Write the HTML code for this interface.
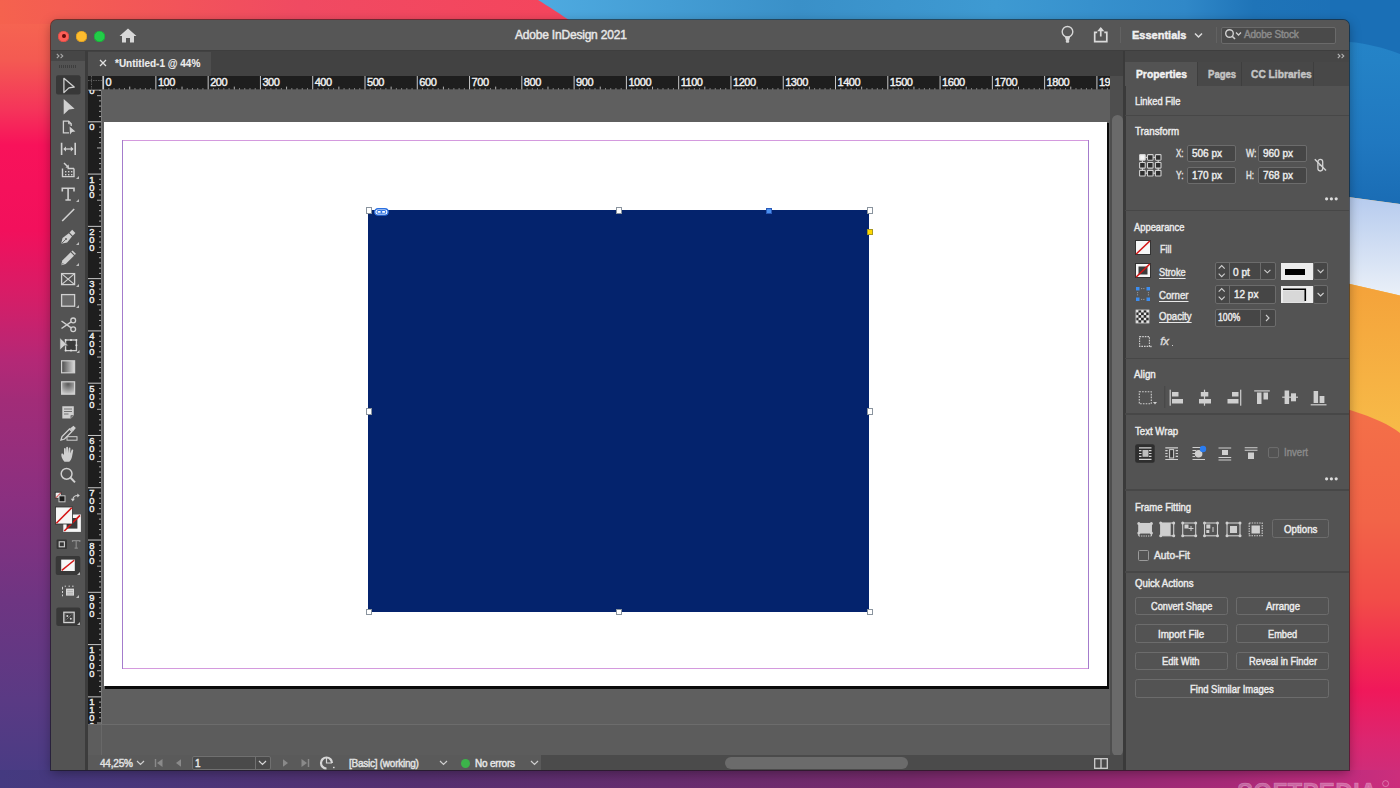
<!DOCTYPE html>
<html><head><meta charset="utf-8">
<style>
*{margin:0;padding:0;box-sizing:border-box}
html,body{width:1400px;height:788px;overflow:hidden;background:#444}
body{position:relative;font-family:"Liberation Sans",sans-serif;color:#e6e6e6}
.a{position:absolute}
.t{position:absolute;white-space:nowrap;line-height:1;-webkit-text-stroke:0.42px currentColor}
svg{position:absolute;overflow:visible}
.u{text-decoration:underline;text-underline-offset:2px}
</style></head><body>
<svg style="left:0;top:0" width="1400" height="788" viewBox="0 0 1400 788">
<defs>
<linearGradient id="gl" x1="0" y1="0" x2="0" y2="788" gradientUnits="userSpaceOnUse">
<stop offset="0.0000" stop-color="#f76a50"/>
<stop offset="0.0761" stop-color="#f45a52"/>
<stop offset="0.1396" stop-color="#f5345a"/>
<stop offset="0.1840" stop-color="#f8125a"/>
<stop offset="0.2919" stop-color="#f2105c"/>
<stop offset="0.3807" stop-color="#d41e68"/>
<stop offset="0.4569" stop-color="#b42876"/>
<stop offset="0.5076" stop-color="#a22c78"/>
<stop offset="0.6345" stop-color="#8a3080"/>
<stop offset="0.7614" stop-color="#6e3582"/>
<stop offset="0.8883" stop-color="#5a3a84"/>
<stop offset="1.0000" stop-color="#463c84"/>
</linearGradient>
<linearGradient id="gt" x1="0" y1="0" x2="600" y2="0" gradientUnits="userSpaceOnUse">
<stop offset="0" stop-color="#f5624e"/>
<stop offset="0.5" stop-color="#f04a62"/>
<stop offset="1" stop-color="#f5445c"/>
</linearGradient>
<linearGradient id="gb" x1="0" y1="0" x2="1400" y2="0" gradientUnits="userSpaceOnUse">
<stop offset="0" stop-color="#443a80"/>
<stop offset="0.3" stop-color="#553070"/>
<stop offset="0.65" stop-color="#782a6c"/>
<stop offset="0.88" stop-color="#a82a78"/>
<stop offset="0.96" stop-color="#c02c7e"/>
<stop offset="1" stop-color="#cc2e7c"/>
</linearGradient>
<linearGradient id="gblue" x1="540" y1="0" x2="1400" y2="0" gradientUnits="userSpaceOnUse">
<stop offset="0" stop-color="#4eaae0"/>
<stop offset="0.3" stop-color="#3a90c8"/>
<stop offset="0.53" stop-color="#3e9ad2"/>
<stop offset="0.75" stop-color="#3088c8"/>
<stop offset="0.83" stop-color="#1f74b8"/>
<stop offset="1" stop-color="#1a6eb6"/>
</linearGradient>
<linearGradient id="gr" x1="0" y1="0" x2="0" y2="788" gradientUnits="userSpaceOnUse">
<stop offset="0.0000" stop-color="#f7b846"/>
<stop offset="0.5140" stop-color="#f7b846"/>
<stop offset="0.5178" stop-color="#f47048"/>
<stop offset="0.6599" stop-color="#f26448"/>
<stop offset="0.7614" stop-color="#f24c48"/>
<stop offset="0.8249" stop-color="#f22e50"/>
<stop offset="0.8756" stop-color="#f0185a"/>
<stop offset="0.9391" stop-color="#dc2670"/>
<stop offset="1.0000" stop-color="#c8307e"/>
</linearGradient>
<linearGradient id="gbl2" x1="0" y1="0" x2="0" y2="204" gradientUnits="userSpaceOnUse">
<stop offset="0" stop-color="#2686ca"/><stop offset="0.3" stop-color="#2482c6"/><stop offset="0.7" stop-color="#2078c0"/><stop offset="1" stop-color="#1a6cb4"/></linearGradient>
<linearGradient id="glt" x1="0" y1="197" x2="0" y2="295" gradientUnits="userSpaceOnUse">
<stop offset="0" stop-color="#b6cbee"/><stop offset="1" stop-color="#eaf0f8"/></linearGradient>
<linearGradient id="gor" x1="0" y1="282" x2="0" y2="430" gradientUnits="userSpaceOnUse">
<stop offset="0" stop-color="#f4a23a"/><stop offset="1" stop-color="#f7ba48"/></linearGradient>
</defs>
<rect width="1400" height="788" fill="url(#gl)"/>
<rect width="700" height="24" fill="url(#gt)"/>
<path d="M538 0 C548 6 560 14 575 24 L1400 24 L1400 0 Z" fill="url(#gblue)"/>
<rect x="1330" y="0" width="70" height="788" fill="url(#gr)"/>
<path d="M1330 0 H1400 V204 L1350 197.3 L1330 195 Z" fill="url(#gbl2)"/>
<path d="M1330 0 H1400 V54 C1385 48 1365 43 1350 42 L1330 40 Z" fill="#1a6fb6"/>
<path d="M1330 195 L1350 197.3 L1400 204 V295.5 L1350 284 L1330 280 Z" fill="url(#glt)"/>
<path d="M1330 280 L1350 284 L1400 295.5 V433 C1390 425 1375 418 1350 410 L1330 407 Z" fill="url(#gor)"/>
<rect x="0" y="770" width="1400" height="18" fill="url(#gb)"/>
</svg>
<div class="a" style="left:51px;top:20px;width:1298px;height:750px;background:#535353;border-radius:6px 6px 0 0;box-shadow:0 0 0 1px rgba(20,20,20,.55),0 3px 12px rgba(0,0,0,.35)"></div>
<div class="a" style="left:51px;top:20px;width:1298px;height:30px;background:#565656;border-radius:6px 6px 0 0"></div>
<div class="a" style="left:51px;top:50px;width:1298px;height:1px;background:#3e3e3e;"></div>
<div class="a" style="left:58.3px;top:30.6px;width:11px;height:11px;background:#fd5e57;border-radius:50%;box-shadow:inset 0 0 0 0.6px #d84a44"></div>
<div class="a" style="left:61.9px;top:34.2px;width:3.8px;height:3.8px;background:#600a0a;border-radius:50%"></div>
<div class="a" style="left:75.8px;top:30.6px;width:11px;height:11px;background:#fdbc2e;border-radius:50%;box-shadow:inset 0 0 0 0.6px #d89a20"></div>
<div class="a" style="left:93.6px;top:30.6px;width:11px;height:11px;background:#22cd48;border-radius:50%;box-shadow:inset 0 0 0 0.6px #1aa838"></div>
<svg style="left:119px;top:28px;" width="18" height="15" viewBox="0 0 18 15"><path d="M9 0.5 L17.5 8 L15 8 L15 14.5 L11 14.5 L11 10 L7 10 L7 14.5 L3 14.5 L3 8 L0.5 8 Z" fill="#d8d8d8"/></svg>
<div class="t" style="left:515px;top:29px;font-size:12px;color:#e8e8e8;font-weight:400;letter-spacing:-0.2px;">Adobe InDesign 2021</div>
<svg style="left:1060px;top:25px;" width="16" height="19" viewBox="0 0 16 19"><circle cx="7.5" cy="6.8" r="5.3" fill="none" stroke="#d6d6d6" stroke-width="1.4"/><path d="M4.6 11.2 L6 15.5 L9 15.5 L10.4 11.2 Z" fill="#d6d6d6"/><rect x="5.8" y="15" width="3.4" height="2.8" rx="1" fill="#d6d6d6"/></svg>
<svg style="left:1093px;top:26px;" width="16" height="18" viewBox="0 0 16 18"><path d="M4.2 6.3 L1.7 6.3 L1.7 15.7 L13.8 15.7 L13.8 6.3 L11.3 6.3" fill="none" stroke="#dadada" stroke-width="1.7"/><path d="M7.75 2 L7.75 10.5" stroke="#dadada" stroke-width="1.7"/><path d="M4.2 5.2 L7.75 1 L11.3 5.2 Z" fill="#dadada"/></svg>
<div class="a" style="left:1120px;top:27px;width:1px;height:16px;background:#626262;"></div>
<div class="t" style="left:1132px;top:30px;font-size:11px;color:#f0f0f0;font-weight:700;letter-spacing:0px;">Essentials</div>
<svg style="left:1194px;top:32px;" width="10" height="7" viewBox="0 0 10 7"><path d="M1 1.5 L4.5 5 L8 1.5" fill="none" stroke="#dcdcdc" stroke-width="1.5"/></svg>
<div class="a" style="left:1216px;top:27px;width:1px;height:16px;background:#626262;"></div>
<div class="a" style="left:1221px;top:26.5px;width:115px;height:17px;background:#4a4a4a;border:1px solid #6a6a6a;border-radius:2px"></div>
<svg style="left:1224px;top:28px;" width="20" height="13" viewBox="0 0 20 13"><circle cx="5.5" cy="5.5" r="3.8" fill="none" stroke="#d0d0d0" stroke-width="1.4"/><path d="M8.2 8.2 L11 11" stroke="#d0d0d0" stroke-width="1.6"/><path d="M12 4.5 L14.5 7 L17 4.5" fill="none" stroke="#d0d0d0" stroke-width="1.3"/></svg>
<div class="t" style="left:1244px;top:30px;font-size:10px;color:#8c8c8c;font-weight:400;letter-spacing:-0.2px;">Adobe Stock</div>
<div class="a" style="left:51px;top:51px;width:35px;height:10px;background:#464646;"></div>
<svg style="left:55.5px;top:53px;" width="8" height="6" viewBox="0 0 8 6"><path d="M0.8 0.8 L3 3 L0.8 5.2 M4.6 0.8 L6.8 3 L4.6 5.2" fill="none" stroke="#a8a8a8" stroke-width="1.1"/></svg>
<div class="a" style="left:85px;top:51px;width:3px;height:719px;background:#3c3c3c;"></div>
<svg style="left:59px;top:65px;" width="17" height="3" viewBox="0 0 17 3"><rect x="0" y="0" width="1" height="3" fill="#3e3e3e"/><rect x="2" y="0" width="1" height="3" fill="#3e3e3e"/><rect x="4" y="0" width="1" height="3" fill="#3e3e3e"/><rect x="6" y="0" width="1" height="3" fill="#3e3e3e"/><rect x="8" y="0" width="1" height="3" fill="#3e3e3e"/><rect x="10" y="0" width="1" height="3" fill="#3e3e3e"/><rect x="12" y="0" width="1" height="3" fill="#3e3e3e"/><rect x="14" y="0" width="1" height="3" fill="#3e3e3e"/><rect x="16" y="0" width="1" height="3" fill="#3e3e3e"/></svg>
<svg style="left:51px;top:51px" width="35" height="720" viewBox="51 51 35 720">
<rect x="56" y="75.3" width="24.5" height="19.3" rx="2" fill="#383838"/>
<path d="M63.9 78.3 L74.2 87 L68.9 87.9 L63.9 92.6 Z" fill="none" stroke="#d0d0d0" stroke-width="1.3" stroke-linejoin="round"/>
<path d="M63.7 99 L74.6 108.8 L69 109.6 L63.7 114.6 Z" fill="#d0d0d0"/>
<path d="M69 132.8 L63.4 132.8 L63.4 121.2 L68.6 121.2 L71.2 123.8 L71.2 126" fill="none" stroke="#d0d0d0" stroke-width="1.3"/>
<path d="M68.6 121.2 L68.6 123.8 L71.2 123.8" fill="none" stroke="#d0d0d0" stroke-width="1"/>
<path d="M69.6 126.6 L75.4 131.6 L72 132 L70 134.6 Z" fill="#d0d0d0"/>
<path d="M61.6 142.8 V155 M75.2 142.8 V155" stroke="#d0d0d0" stroke-width="1.6"/>
<path d="M64 149 H72.8" stroke="#d0d0d0" stroke-width="1.3"/>
<path d="M63.2 149 L66 146.4 L66 151.6 Z M73.6 149 L70.8 146.4 L70.8 151.6 Z" fill="#d0d0d0"/>
<path d="M62.5 168.5 V176.6 H74 V168.5 M67.5 168.5 H74" fill="none" stroke="#d0d0d0" stroke-width="1.4"/>
<path d="M64 163 L68 167" stroke="#d0d0d0" stroke-width="1.4"/><path d="M69 168 L65.5 167.6 L68.6 164.5 Z" fill="#d0d0d0"/>
<rect x="65" y="171" width="1.4" height="1.4" fill="#d0d0d0"/><rect x="68" y="171" width="1.4" height="1.4" fill="#d0d0d0"/><rect x="71" y="171" width="1.4" height="1.4" fill="#d0d0d0"/>
<rect x="65" y="174" width="1.4" height="1.4" fill="#d0d0d0"/><rect x="68" y="174" width="1.4" height="1.4" fill="#d0d0d0"/><rect x="71" y="174" width="1.4" height="1.4" fill="#d0d0d0"/>
<path d="M79 176 L79 179 L76 179 Z" fill="#bdbdbd"/>
<path d="M62.3 191.5 V188.3 H74 V191.5 M68.1 188.3 V200 M65.4 200 H70.8" fill="none" stroke="#d0d0d0" stroke-width="1.6"/>
<path d="M79 199 L79 202 L76 202 Z" fill="#bdbdbd"/>
<path d="M62.2 221 L74.2 209" stroke="#d0d0d0" stroke-width="1.6"/>
<path d="M61.2 243.8 L62.5 238 L68.8 233.2 L72 236.4 L67.2 242.6 Z" fill="#d0d0d0"/>
<path d="M69.5 232.5 L72.2 229.8 L75.4 233 L72.7 235.7 Z" fill="#d0d0d0"/>
<path d="M61.5 243.6 L65.5 239.6" stroke="#535353" stroke-width="0.9"/><circle cx="66" cy="239" r="0.9" fill="#535353"/>
<path d="M79 242 L79 245 L76 245 Z" fill="#bdbdbd"/>
<path d="M61.2 265.2 L62.3 260.6 L70.6 252.3 L74 255.7 L65.7 264 Z" fill="#d0d0d0"/>
<path d="M71.4 251.5 L72.5 250.4 L75.9 253.8 L74.8 254.9 Z" fill="#d0d0d0"/>
<path d="M61.8 264.6 L63.2 263.2" stroke="#535353" stroke-width="1"/>
<path d="M79 263 L79 266 L76 266 Z" fill="#bdbdbd"/>
<rect x="61.6" y="273.6" width="13" height="11" fill="none" stroke="#d0d0d0" stroke-width="1.3"/>
<path d="M61.6 273.6 L74.6 284.6 M74.6 273.6 L61.6 284.6" stroke="#d0d0d0" stroke-width="1.2"/>
<path d="M79 284 L79 287 L76 287 Z" fill="#bdbdbd"/>
<rect x="61.6" y="294.6" width="13" height="11.6" fill="#6a6a6a" stroke="#d0d0d0" stroke-width="1.3"/>
<path d="M79 305 L79 308 L76 308 Z" fill="#bdbdbd"/>
<circle cx="73.2" cy="320.4" r="2.4" fill="none" stroke="#d0d0d0" stroke-width="1.3"/>
<circle cx="73.2" cy="329.2" r="2.4" fill="none" stroke="#d0d0d0" stroke-width="1.3"/>
<path d="M71.2 321.8 L61.5 328.5 M71.2 327.8 L61.5 321" stroke="#d0d0d0" stroke-width="1.5"/>
<rect x="65.6" y="340" width="10.8" height="10.6" fill="#3a3a3a" stroke="#d0d0d0" stroke-width="1.3"/>
<circle cx="65.6" cy="340" r="1" fill="#e0e0e0"/><circle cx="71" cy="340" r="1" fill="#e0e0e0"/><circle cx="76.4" cy="340" r="1" fill="#e0e0e0"/>
<circle cx="65.6" cy="350.6" r="1" fill="#e0e0e0"/><circle cx="71" cy="350.6" r="1" fill="#e0e0e0"/><circle cx="76.4" cy="345.3" r="1" fill="#e0e0e0"/>
<path d="M59.9 337.8 L68.2 345.6 L64.2 345.9 L59.9 350 Z" fill="#d0d0d0" stroke="#535353" stroke-width="0.6"/>
<path d="M79.5 350 L79.5 353 L76.5 353 Z" fill="#bdbdbd"/>
<defs><linearGradient id="tg1" x1="0" y1="0" x2="1" y2="0"><stop offset="0" stop-color="#4a4a4a"/><stop offset="1" stop-color="#dcdcdc"/></linearGradient>
<radialGradient id="tg2" cx="0.5" cy="0.2" r="0.9"><stop offset="0" stop-color="#5a5a5a"/><stop offset="1" stop-color="#d8d8d8"/></radialGradient></defs>
<rect x="61.6" y="360.8" width="13" height="12" fill="url(#tg1)" stroke="#d0d0d0" stroke-width="1.2"/>
<rect x="61.6" y="381.8" width="13" height="12.4" fill="url(#tg2)" stroke="#d0d0d0" stroke-width="1.2"/>
<path d="M62.3 406.3 H73.8 V415.6 L70.9 418.5 H62.3 Z" fill="#d0d0d0"/>
<path d="M64 409 H72 M64 411.5 H72 M64 414 H68.5" stroke="#6a6a6a" stroke-width="0.9"/>
<path d="M70.9 418.5 V415.6 H73.8" fill="#8a8a8a" stroke="#535353" stroke-width="0.6"/>
<path d="M61 440 L62 436.5 L69.5 429 L72 431.5 L64.5 439 Z" fill="none" stroke="#d0d0d0" stroke-width="1.3"/>
<path d="M70 428.5 L73.5 425.8 L75.8 428.1 L73 431.5 Z" fill="#d0d0d0"/>
<rect x="67" y="436.7" width="10" height="3.5" fill="none" stroke="#d0d0d0" stroke-width="1"/>
<path d="M64.5 461.8 C61.5 458.5 61 455 61.5 453.8 C62.2 453 63.4 453.7 64 455.2 L64 448.8 C64 447.7 65.6 447.7 65.7 448.8 L66 453 L66.2 447.6 C66.3 446.6 68 446.6 68 447.6 L68.2 453 L68.8 448.2 C69 447.2 70.5 447.3 70.4 448.4 L70.3 453.5 L71.6 450 C72 449.1 73.4 449.5 73.2 450.5 L72 456.8 C71.5 459 70.5 460.8 69.3 461.8 Z" fill="#d0d0d0"/>
<circle cx="66.6" cy="473.8" r="5.4" fill="none" stroke="#d0d0d0" stroke-width="1.5"/>
<path d="M70.6 477.8 L75 482.4" stroke="#d0d0d0" stroke-width="2"/>
<rect x="55.2" y="492.2" width="6" height="6" fill="#f0f0f0" stroke="#2a2a2a" stroke-width="0.8"/>
<path d="M55.8 497.8 L60.8 492.8" stroke="#d01818" stroke-width="1"/>
<rect x="59" y="495.8" width="6" height="6" fill="#1a1a1a" stroke="#c8c8c8" stroke-width="1"/>
<path d="M73 499.5 C73 496.6 74.5 495.5 77.8 495.5" fill="none" stroke="#d0d0d0" stroke-width="1.1"/>
<path d="M72.8 501.5 L70.8 498.8 L74.9 498.8 Z M79.8 495.5 L77.3 493.5 L77.3 497.5 Z" fill="#d0d0d0"/>
<path d="M77.8 497.5 L77.8 502" stroke="#d0d0d0" stroke-width="0"/>
<rect x="63.3" y="514.5" width="17.6" height="17.4" fill="#f6f6f6"/>
<rect x="66.6" y="518" width="10.8" height="10.6" fill="#3a3a3a"/>
<path d="M64.3 531 L80 515.4" stroke="#d41515" stroke-width="1.6"/>
<rect x="55.5" y="507" width="17" height="17" fill="#f6f6f6" stroke="#2e2e2e" stroke-width="0.8"/>
<path d="M56.3 523.2 L71.8 507.8" stroke="#d41515" stroke-width="1.6"/>
<rect x="56.6" y="539.6" width="10.4" height="9.4" rx="1" fill="#353535"/>
<rect x="59.2" y="541.8" width="5.2" height="5" fill="none" stroke="#cfcfcf" stroke-width="1.1"/>
<path d="M72.5 542 V540.6 H79.8 V542 M76.2 540.6 V548.2 M74.6 548.2 H77.8" fill="none" stroke="#8a8a8a" stroke-width="1.2"/>
<rect x="55.7" y="556" width="24.6" height="19" rx="2" fill="#383838"/>
<rect x="61.2" y="559.6" width="13.6" height="11.4" fill="#f6f6f6"/>
<path d="M61.8 570.4 L74.2 560.2" stroke="#d41515" stroke-width="1.4"/>
<path d="M80 572 L80 575 L77 575 Z" fill="#bdbdbd"/>
<rect x="66" y="588.6" width="8" height="7" fill="#d8d8d8"/>
<path d="M67.2 590.6 H73 M67.2 592.4 H73 M67.2 594 H73" stroke="#a0a0a0" stroke-width="0.7"/>
<path d="M62.5 586.8 V589.5 M62.5 591 V593 M62.5 594.5 V596.3 M64.7 586.2 H66 M68.5 586.2 H70 M72 586.2 H73.6" stroke="#d0d0d0" stroke-width="1"/>
<path d="M79 595 L79 598 L76 598 Z" fill="#bdbdbd"/>
<rect x="56.3" y="607.6" width="24" height="18.3" rx="2" fill="#383838"/>
<rect x="63.8" y="612.2" width="10.4" height="10.4" fill="#5a5a5a" stroke="#d4d4d4" stroke-width="1.2"/>
<rect x="65.6" y="614" width="6.8" height="6.8" fill="#3a3a3a"/>
<circle cx="67.3" cy="616" r="1" fill="#d4d4d4"/><circle cx="70.8" cy="618.8" r="1" fill="#d4d4d4"/><path d="M66.5 619.5 L71.5 614.8" stroke="#8a8a8a" stroke-width="0.8"/>
<path d="M80 622 L80 625 L77 625 Z" fill="#bdbdbd"/>
</svg>
<div class="a" style="left:88px;top:51px;width:1035px;height:25px;background:#424242;"></div>
<div class="a" style="left:88px;top:52px;width:123px;height:24px;background:#4e4e4e;"></div>
<svg style="left:99px;top:59px;" width="8" height="8" viewBox="0 0 8 8"><path d="M1 1 L7 7 M7 1 L1 7" stroke="#e0e0e0" stroke-width="1.3"/></svg>
<div class="t" style="left:115px;top:59.3px;font-size:10px;color:#ececec;font-weight:700;letter-spacing:0px;-webkit-text-stroke:0.1px #ececec">*Untitled-1 @ 44%</div>
<div class="a" style="left:88px;top:76px;width:1022px;height:14px;background:#1e1e1e;"></div>
<div class="a" style="left:88px;top:90px;width:14px;height:634px;background:#1e1e1e;"></div>
<div class="a" style="left:88px;top:724px;width:14px;height:31px;background:#5d5d5d;"></div>
<div class="a" style="left:102px;top:76px;width:1.5px;height:14px;background:#8a8a8a;"></div>
<div class="a" style="left:88px;top:89.5px;width:14px;height:1px;background:#6a6a6a;"></div>
<div class="a" style="left:101px;top:90px;width:1.5px;height:634px;background:#777777;"></div>
<div class="a" style="left:101px;top:725px;width:1.2px;height:30px;background:#686868;"></div>
<svg style="left:88px;top:76px;" width="14" height="14" viewBox="0 0 14 14"><path d="M3.5 0 V14 M0 4.5 H14" stroke="#5a5a5a" stroke-width="1" stroke-dasharray="1.5 1"/></svg>
<svg style="left:88px;top:76px" width="1022" height="14" viewBox="88 76 1022 14"><path d="M103.60 76 V90" stroke="#c8c8c8" stroke-width="1"/><path d="M108.83 88.3 V90" stroke="#a8a8a8" stroke-width="1"/><path d="M114.06 88.3 V90" stroke="#a8a8a8" stroke-width="1"/><path d="M119.28 88.3 V90" stroke="#a8a8a8" stroke-width="1"/><path d="M124.51 88.3 V90" stroke="#a8a8a8" stroke-width="1"/><path d="M129.74 86.6 V90" stroke="#b0b0b0" stroke-width="1"/><path d="M134.97 88.3 V90" stroke="#a8a8a8" stroke-width="1"/><path d="M140.20 88.3 V90" stroke="#a8a8a8" stroke-width="1"/><path d="M145.42 88.3 V90" stroke="#a8a8a8" stroke-width="1"/><path d="M150.65 88.3 V90" stroke="#a8a8a8" stroke-width="1"/><path d="M155.88 76 V90" stroke="#c8c8c8" stroke-width="1"/><path d="M161.11 88.3 V90" stroke="#a8a8a8" stroke-width="1"/><path d="M166.34 88.3 V90" stroke="#a8a8a8" stroke-width="1"/><path d="M171.56 88.3 V90" stroke="#a8a8a8" stroke-width="1"/><path d="M176.79 88.3 V90" stroke="#a8a8a8" stroke-width="1"/><path d="M182.02 86.6 V90" stroke="#b0b0b0" stroke-width="1"/><path d="M187.25 88.3 V90" stroke="#a8a8a8" stroke-width="1"/><path d="M192.48 88.3 V90" stroke="#a8a8a8" stroke-width="1"/><path d="M197.70 88.3 V90" stroke="#a8a8a8" stroke-width="1"/><path d="M202.93 88.3 V90" stroke="#a8a8a8" stroke-width="1"/><path d="M208.16 76 V90" stroke="#c8c8c8" stroke-width="1"/><path d="M213.39 88.3 V90" stroke="#a8a8a8" stroke-width="1"/><path d="M218.62 88.3 V90" stroke="#a8a8a8" stroke-width="1"/><path d="M223.84 88.3 V90" stroke="#a8a8a8" stroke-width="1"/><path d="M229.07 88.3 V90" stroke="#a8a8a8" stroke-width="1"/><path d="M234.30 86.6 V90" stroke="#b0b0b0" stroke-width="1"/><path d="M239.53 88.3 V90" stroke="#a8a8a8" stroke-width="1"/><path d="M244.76 88.3 V90" stroke="#a8a8a8" stroke-width="1"/><path d="M249.98 88.3 V90" stroke="#a8a8a8" stroke-width="1"/><path d="M255.21 88.3 V90" stroke="#a8a8a8" stroke-width="1"/><path d="M260.44 76 V90" stroke="#c8c8c8" stroke-width="1"/><path d="M265.67 88.3 V90" stroke="#a8a8a8" stroke-width="1"/><path d="M270.90 88.3 V90" stroke="#a8a8a8" stroke-width="1"/><path d="M276.12 88.3 V90" stroke="#a8a8a8" stroke-width="1"/><path d="M281.35 88.3 V90" stroke="#a8a8a8" stroke-width="1"/><path d="M286.58 86.6 V90" stroke="#b0b0b0" stroke-width="1"/><path d="M291.81 88.3 V90" stroke="#a8a8a8" stroke-width="1"/><path d="M297.04 88.3 V90" stroke="#a8a8a8" stroke-width="1"/><path d="M302.26 88.3 V90" stroke="#a8a8a8" stroke-width="1"/><path d="M307.49 88.3 V90" stroke="#a8a8a8" stroke-width="1"/><path d="M312.72 76 V90" stroke="#c8c8c8" stroke-width="1"/><path d="M317.95 88.3 V90" stroke="#a8a8a8" stroke-width="1"/><path d="M323.18 88.3 V90" stroke="#a8a8a8" stroke-width="1"/><path d="M328.40 88.3 V90" stroke="#a8a8a8" stroke-width="1"/><path d="M333.63 88.3 V90" stroke="#a8a8a8" stroke-width="1"/><path d="M338.86 86.6 V90" stroke="#b0b0b0" stroke-width="1"/><path d="M344.09 88.3 V90" stroke="#a8a8a8" stroke-width="1"/><path d="M349.32 88.3 V90" stroke="#a8a8a8" stroke-width="1"/><path d="M354.54 88.3 V90" stroke="#a8a8a8" stroke-width="1"/><path d="M359.77 88.3 V90" stroke="#a8a8a8" stroke-width="1"/><path d="M365.00 76 V90" stroke="#c8c8c8" stroke-width="1"/><path d="M370.23 88.3 V90" stroke="#a8a8a8" stroke-width="1"/><path d="M375.46 88.3 V90" stroke="#a8a8a8" stroke-width="1"/><path d="M380.68 88.3 V90" stroke="#a8a8a8" stroke-width="1"/><path d="M385.91 88.3 V90" stroke="#a8a8a8" stroke-width="1"/><path d="M391.14 86.6 V90" stroke="#b0b0b0" stroke-width="1"/><path d="M396.37 88.3 V90" stroke="#a8a8a8" stroke-width="1"/><path d="M401.60 88.3 V90" stroke="#a8a8a8" stroke-width="1"/><path d="M406.82 88.3 V90" stroke="#a8a8a8" stroke-width="1"/><path d="M412.05 88.3 V90" stroke="#a8a8a8" stroke-width="1"/><path d="M417.28 76 V90" stroke="#c8c8c8" stroke-width="1"/><path d="M422.51 88.3 V90" stroke="#a8a8a8" stroke-width="1"/><path d="M427.74 88.3 V90" stroke="#a8a8a8" stroke-width="1"/><path d="M432.96 88.3 V90" stroke="#a8a8a8" stroke-width="1"/><path d="M438.19 88.3 V90" stroke="#a8a8a8" stroke-width="1"/><path d="M443.42 86.6 V90" stroke="#b0b0b0" stroke-width="1"/><path d="M448.65 88.3 V90" stroke="#a8a8a8" stroke-width="1"/><path d="M453.88 88.3 V90" stroke="#a8a8a8" stroke-width="1"/><path d="M459.10 88.3 V90" stroke="#a8a8a8" stroke-width="1"/><path d="M464.33 88.3 V90" stroke="#a8a8a8" stroke-width="1"/><path d="M469.56 76 V90" stroke="#c8c8c8" stroke-width="1"/><path d="M474.79 88.3 V90" stroke="#a8a8a8" stroke-width="1"/><path d="M480.02 88.3 V90" stroke="#a8a8a8" stroke-width="1"/><path d="M485.24 88.3 V90" stroke="#a8a8a8" stroke-width="1"/><path d="M490.47 88.3 V90" stroke="#a8a8a8" stroke-width="1"/><path d="M495.70 86.6 V90" stroke="#b0b0b0" stroke-width="1"/><path d="M500.93 88.3 V90" stroke="#a8a8a8" stroke-width="1"/><path d="M506.16 88.3 V90" stroke="#a8a8a8" stroke-width="1"/><path d="M511.38 88.3 V90" stroke="#a8a8a8" stroke-width="1"/><path d="M516.61 88.3 V90" stroke="#a8a8a8" stroke-width="1"/><path d="M521.84 76 V90" stroke="#c8c8c8" stroke-width="1"/><path d="M527.07 88.3 V90" stroke="#a8a8a8" stroke-width="1"/><path d="M532.30 88.3 V90" stroke="#a8a8a8" stroke-width="1"/><path d="M537.52 88.3 V90" stroke="#a8a8a8" stroke-width="1"/><path d="M542.75 88.3 V90" stroke="#a8a8a8" stroke-width="1"/><path d="M547.98 86.6 V90" stroke="#b0b0b0" stroke-width="1"/><path d="M553.21 88.3 V90" stroke="#a8a8a8" stroke-width="1"/><path d="M558.44 88.3 V90" stroke="#a8a8a8" stroke-width="1"/><path d="M563.66 88.3 V90" stroke="#a8a8a8" stroke-width="1"/><path d="M568.89 88.3 V90" stroke="#a8a8a8" stroke-width="1"/><path d="M574.12 76 V90" stroke="#c8c8c8" stroke-width="1"/><path d="M579.35 88.3 V90" stroke="#a8a8a8" stroke-width="1"/><path d="M584.58 88.3 V90" stroke="#a8a8a8" stroke-width="1"/><path d="M589.80 88.3 V90" stroke="#a8a8a8" stroke-width="1"/><path d="M595.03 88.3 V90" stroke="#a8a8a8" stroke-width="1"/><path d="M600.26 86.6 V90" stroke="#b0b0b0" stroke-width="1"/><path d="M605.49 88.3 V90" stroke="#a8a8a8" stroke-width="1"/><path d="M610.72 88.3 V90" stroke="#a8a8a8" stroke-width="1"/><path d="M615.94 88.3 V90" stroke="#a8a8a8" stroke-width="1"/><path d="M621.17 88.3 V90" stroke="#a8a8a8" stroke-width="1"/><path d="M626.40 76 V90" stroke="#c8c8c8" stroke-width="1"/><path d="M631.63 88.3 V90" stroke="#a8a8a8" stroke-width="1"/><path d="M636.86 88.3 V90" stroke="#a8a8a8" stroke-width="1"/><path d="M642.08 88.3 V90" stroke="#a8a8a8" stroke-width="1"/><path d="M647.31 88.3 V90" stroke="#a8a8a8" stroke-width="1"/><path d="M652.54 86.6 V90" stroke="#b0b0b0" stroke-width="1"/><path d="M657.77 88.3 V90" stroke="#a8a8a8" stroke-width="1"/><path d="M663.00 88.3 V90" stroke="#a8a8a8" stroke-width="1"/><path d="M668.22 88.3 V90" stroke="#a8a8a8" stroke-width="1"/><path d="M673.45 88.3 V90" stroke="#a8a8a8" stroke-width="1"/><path d="M678.68 76 V90" stroke="#c8c8c8" stroke-width="1"/><path d="M683.91 88.3 V90" stroke="#a8a8a8" stroke-width="1"/><path d="M689.14 88.3 V90" stroke="#a8a8a8" stroke-width="1"/><path d="M694.36 88.3 V90" stroke="#a8a8a8" stroke-width="1"/><path d="M699.59 88.3 V90" stroke="#a8a8a8" stroke-width="1"/><path d="M704.82 86.6 V90" stroke="#b0b0b0" stroke-width="1"/><path d="M710.05 88.3 V90" stroke="#a8a8a8" stroke-width="1"/><path d="M715.28 88.3 V90" stroke="#a8a8a8" stroke-width="1"/><path d="M720.50 88.3 V90" stroke="#a8a8a8" stroke-width="1"/><path d="M725.73 88.3 V90" stroke="#a8a8a8" stroke-width="1"/><path d="M730.96 76 V90" stroke="#c8c8c8" stroke-width="1"/><path d="M736.19 88.3 V90" stroke="#a8a8a8" stroke-width="1"/><path d="M741.42 88.3 V90" stroke="#a8a8a8" stroke-width="1"/><path d="M746.64 88.3 V90" stroke="#a8a8a8" stroke-width="1"/><path d="M751.87 88.3 V90" stroke="#a8a8a8" stroke-width="1"/><path d="M757.10 86.6 V90" stroke="#b0b0b0" stroke-width="1"/><path d="M762.33 88.3 V90" stroke="#a8a8a8" stroke-width="1"/><path d="M767.56 88.3 V90" stroke="#a8a8a8" stroke-width="1"/><path d="M772.78 88.3 V90" stroke="#a8a8a8" stroke-width="1"/><path d="M778.01 88.3 V90" stroke="#a8a8a8" stroke-width="1"/><path d="M783.24 76 V90" stroke="#c8c8c8" stroke-width="1"/><path d="M788.47 88.3 V90" stroke="#a8a8a8" stroke-width="1"/><path d="M793.70 88.3 V90" stroke="#a8a8a8" stroke-width="1"/><path d="M798.92 88.3 V90" stroke="#a8a8a8" stroke-width="1"/><path d="M804.15 88.3 V90" stroke="#a8a8a8" stroke-width="1"/><path d="M809.38 86.6 V90" stroke="#b0b0b0" stroke-width="1"/><path d="M814.61 88.3 V90" stroke="#a8a8a8" stroke-width="1"/><path d="M819.84 88.3 V90" stroke="#a8a8a8" stroke-width="1"/><path d="M825.06 88.3 V90" stroke="#a8a8a8" stroke-width="1"/><path d="M830.29 88.3 V90" stroke="#a8a8a8" stroke-width="1"/><path d="M835.52 76 V90" stroke="#c8c8c8" stroke-width="1"/><path d="M840.75 88.3 V90" stroke="#a8a8a8" stroke-width="1"/><path d="M845.98 88.3 V90" stroke="#a8a8a8" stroke-width="1"/><path d="M851.20 88.3 V90" stroke="#a8a8a8" stroke-width="1"/><path d="M856.43 88.3 V90" stroke="#a8a8a8" stroke-width="1"/><path d="M861.66 86.6 V90" stroke="#b0b0b0" stroke-width="1"/><path d="M866.89 88.3 V90" stroke="#a8a8a8" stroke-width="1"/><path d="M872.12 88.3 V90" stroke="#a8a8a8" stroke-width="1"/><path d="M877.34 88.3 V90" stroke="#a8a8a8" stroke-width="1"/><path d="M882.57 88.3 V90" stroke="#a8a8a8" stroke-width="1"/><path d="M887.80 76 V90" stroke="#c8c8c8" stroke-width="1"/><path d="M893.03 88.3 V90" stroke="#a8a8a8" stroke-width="1"/><path d="M898.26 88.3 V90" stroke="#a8a8a8" stroke-width="1"/><path d="M903.48 88.3 V90" stroke="#a8a8a8" stroke-width="1"/><path d="M908.71 88.3 V90" stroke="#a8a8a8" stroke-width="1"/><path d="M913.94 86.6 V90" stroke="#b0b0b0" stroke-width="1"/><path d="M919.17 88.3 V90" stroke="#a8a8a8" stroke-width="1"/><path d="M924.40 88.3 V90" stroke="#a8a8a8" stroke-width="1"/><path d="M929.62 88.3 V90" stroke="#a8a8a8" stroke-width="1"/><path d="M934.85 88.3 V90" stroke="#a8a8a8" stroke-width="1"/><path d="M940.08 76 V90" stroke="#c8c8c8" stroke-width="1"/><path d="M945.31 88.3 V90" stroke="#a8a8a8" stroke-width="1"/><path d="M950.54 88.3 V90" stroke="#a8a8a8" stroke-width="1"/><path d="M955.76 88.3 V90" stroke="#a8a8a8" stroke-width="1"/><path d="M960.99 88.3 V90" stroke="#a8a8a8" stroke-width="1"/><path d="M966.22 86.6 V90" stroke="#b0b0b0" stroke-width="1"/><path d="M971.45 88.3 V90" stroke="#a8a8a8" stroke-width="1"/><path d="M976.68 88.3 V90" stroke="#a8a8a8" stroke-width="1"/><path d="M981.90 88.3 V90" stroke="#a8a8a8" stroke-width="1"/><path d="M987.13 88.3 V90" stroke="#a8a8a8" stroke-width="1"/><path d="M992.36 76 V90" stroke="#c8c8c8" stroke-width="1"/><path d="M997.59 88.3 V90" stroke="#a8a8a8" stroke-width="1"/><path d="M1002.82 88.3 V90" stroke="#a8a8a8" stroke-width="1"/><path d="M1008.04 88.3 V90" stroke="#a8a8a8" stroke-width="1"/><path d="M1013.27 88.3 V90" stroke="#a8a8a8" stroke-width="1"/><path d="M1018.50 86.6 V90" stroke="#b0b0b0" stroke-width="1"/><path d="M1023.73 88.3 V90" stroke="#a8a8a8" stroke-width="1"/><path d="M1028.96 88.3 V90" stroke="#a8a8a8" stroke-width="1"/><path d="M1034.18 88.3 V90" stroke="#a8a8a8" stroke-width="1"/><path d="M1039.41 88.3 V90" stroke="#a8a8a8" stroke-width="1"/><path d="M1044.64 76 V90" stroke="#c8c8c8" stroke-width="1"/><path d="M1049.87 88.3 V90" stroke="#a8a8a8" stroke-width="1"/><path d="M1055.10 88.3 V90" stroke="#a8a8a8" stroke-width="1"/><path d="M1060.32 88.3 V90" stroke="#a8a8a8" stroke-width="1"/><path d="M1065.55 88.3 V90" stroke="#a8a8a8" stroke-width="1"/><path d="M1070.78 86.6 V90" stroke="#b0b0b0" stroke-width="1"/><path d="M1076.01 88.3 V90" stroke="#a8a8a8" stroke-width="1"/><path d="M1081.24 88.3 V90" stroke="#a8a8a8" stroke-width="1"/><path d="M1086.46 88.3 V90" stroke="#a8a8a8" stroke-width="1"/><path d="M1091.69 88.3 V90" stroke="#a8a8a8" stroke-width="1"/><path d="M1096.92 76 V90" stroke="#c8c8c8" stroke-width="1"/><path d="M1102.15 88.3 V90" stroke="#a8a8a8" stroke-width="1"/><path d="M1107.38 88.3 V90" stroke="#a8a8a8" stroke-width="1"/><rect x="88" y="89.3" width="1022" height="1" fill="#5c5c5c"/></svg>
<div class="t" style="left:105.6px;top:77.4px;font-size:11px;color:#f0f0f0;font-weight:400;letter-spacing:-0.45px;">0</div>
<div class="t" style="left:157.9px;top:77.4px;font-size:11px;color:#f0f0f0;font-weight:400;letter-spacing:-0.45px;">100</div>
<div class="t" style="left:210.2px;top:77.4px;font-size:11px;color:#f0f0f0;font-weight:400;letter-spacing:-0.45px;">200</div>
<div class="t" style="left:262.4px;top:77.4px;font-size:11px;color:#f0f0f0;font-weight:400;letter-spacing:-0.45px;">300</div>
<div class="t" style="left:314.7px;top:77.4px;font-size:11px;color:#f0f0f0;font-weight:400;letter-spacing:-0.45px;">400</div>
<div class="t" style="left:367.0px;top:77.4px;font-size:11px;color:#f0f0f0;font-weight:400;letter-spacing:-0.45px;">500</div>
<div class="t" style="left:419.3px;top:77.4px;font-size:11px;color:#f0f0f0;font-weight:400;letter-spacing:-0.45px;">600</div>
<div class="t" style="left:471.6px;top:77.4px;font-size:11px;color:#f0f0f0;font-weight:400;letter-spacing:-0.45px;">700</div>
<div class="t" style="left:523.8px;top:77.4px;font-size:11px;color:#f0f0f0;font-weight:400;letter-spacing:-0.45px;">800</div>
<div class="t" style="left:576.1px;top:77.4px;font-size:11px;color:#f0f0f0;font-weight:400;letter-spacing:-0.45px;">900</div>
<div class="t" style="left:628.4px;top:77.4px;font-size:11px;color:#f0f0f0;font-weight:400;letter-spacing:-0.45px;">1000</div>
<div class="t" style="left:680.7px;top:77.4px;font-size:11px;color:#f0f0f0;font-weight:400;letter-spacing:-0.45px;">1100</div>
<div class="t" style="left:733.0px;top:77.4px;font-size:11px;color:#f0f0f0;font-weight:400;letter-spacing:-0.45px;">1200</div>
<div class="t" style="left:785.2px;top:77.4px;font-size:11px;color:#f0f0f0;font-weight:400;letter-spacing:-0.45px;">1300</div>
<div class="t" style="left:837.5px;top:77.4px;font-size:11px;color:#f0f0f0;font-weight:400;letter-spacing:-0.45px;">1400</div>
<div class="t" style="left:889.8px;top:77.4px;font-size:11px;color:#f0f0f0;font-weight:400;letter-spacing:-0.45px;">1500</div>
<div class="t" style="left:942.1px;top:77.4px;font-size:11px;color:#f0f0f0;font-weight:400;letter-spacing:-0.45px;">1600</div>
<div class="t" style="left:994.4px;top:77.4px;font-size:11px;color:#f0f0f0;font-weight:400;letter-spacing:-0.45px;">1700</div>
<div class="t" style="left:1046.6px;top:77.4px;font-size:11px;color:#f0f0f0;font-weight:400;letter-spacing:-0.45px;">1800</div>
<div class="t" style="left:1098.9px;top:77.4px;font-size:11px;color:#f0f0f0;font-weight:400;letter-spacing:-0.45px;">1900</div>
<div class="a" style="left:1110px;top:76px;width:13px;height:14px;background:#4d4d4d;"></div>
<svg style="left:88px;top:90px" width="14" height="634" viewBox="88 90 14 634"><path d="M99 90.43 H101" stroke="#a8a8a8" stroke-width="1"/><path d="M97 95.66 H101" stroke="#b0b0b0" stroke-width="1"/><path d="M99 100.89 H101" stroke="#a8a8a8" stroke-width="1"/><path d="M99 106.12 H101" stroke="#a8a8a8" stroke-width="1"/><path d="M99 111.34 H101" stroke="#a8a8a8" stroke-width="1"/><path d="M99 116.57 H101" stroke="#a8a8a8" stroke-width="1"/><path d="M88 121.80 H101" stroke="#c8c8c8" stroke-width="1"/><path d="M99 127.03 H101" stroke="#a8a8a8" stroke-width="1"/><path d="M99 132.26 H101" stroke="#a8a8a8" stroke-width="1"/><path d="M99 137.48 H101" stroke="#a8a8a8" stroke-width="1"/><path d="M99 142.71 H101" stroke="#a8a8a8" stroke-width="1"/><path d="M97 147.94 H101" stroke="#b0b0b0" stroke-width="1"/><path d="M99 153.17 H101" stroke="#a8a8a8" stroke-width="1"/><path d="M99 158.40 H101" stroke="#a8a8a8" stroke-width="1"/><path d="M99 163.62 H101" stroke="#a8a8a8" stroke-width="1"/><path d="M99 168.85 H101" stroke="#a8a8a8" stroke-width="1"/><path d="M88 174.08 H101" stroke="#c8c8c8" stroke-width="1"/><path d="M99 179.31 H101" stroke="#a8a8a8" stroke-width="1"/><path d="M99 184.54 H101" stroke="#a8a8a8" stroke-width="1"/><path d="M99 189.76 H101" stroke="#a8a8a8" stroke-width="1"/><path d="M99 194.99 H101" stroke="#a8a8a8" stroke-width="1"/><path d="M97 200.22 H101" stroke="#b0b0b0" stroke-width="1"/><path d="M99 205.45 H101" stroke="#a8a8a8" stroke-width="1"/><path d="M99 210.68 H101" stroke="#a8a8a8" stroke-width="1"/><path d="M99 215.90 H101" stroke="#a8a8a8" stroke-width="1"/><path d="M99 221.13 H101" stroke="#a8a8a8" stroke-width="1"/><path d="M88 226.36 H101" stroke="#c8c8c8" stroke-width="1"/><path d="M99 231.59 H101" stroke="#a8a8a8" stroke-width="1"/><path d="M99 236.82 H101" stroke="#a8a8a8" stroke-width="1"/><path d="M99 242.04 H101" stroke="#a8a8a8" stroke-width="1"/><path d="M99 247.27 H101" stroke="#a8a8a8" stroke-width="1"/><path d="M97 252.50 H101" stroke="#b0b0b0" stroke-width="1"/><path d="M99 257.73 H101" stroke="#a8a8a8" stroke-width="1"/><path d="M99 262.96 H101" stroke="#a8a8a8" stroke-width="1"/><path d="M99 268.18 H101" stroke="#a8a8a8" stroke-width="1"/><path d="M99 273.41 H101" stroke="#a8a8a8" stroke-width="1"/><path d="M88 278.64 H101" stroke="#c8c8c8" stroke-width="1"/><path d="M99 283.87 H101" stroke="#a8a8a8" stroke-width="1"/><path d="M99 289.10 H101" stroke="#a8a8a8" stroke-width="1"/><path d="M99 294.32 H101" stroke="#a8a8a8" stroke-width="1"/><path d="M99 299.55 H101" stroke="#a8a8a8" stroke-width="1"/><path d="M97 304.78 H101" stroke="#b0b0b0" stroke-width="1"/><path d="M99 310.01 H101" stroke="#a8a8a8" stroke-width="1"/><path d="M99 315.24 H101" stroke="#a8a8a8" stroke-width="1"/><path d="M99 320.46 H101" stroke="#a8a8a8" stroke-width="1"/><path d="M99 325.69 H101" stroke="#a8a8a8" stroke-width="1"/><path d="M88 330.92 H101" stroke="#c8c8c8" stroke-width="1"/><path d="M99 336.15 H101" stroke="#a8a8a8" stroke-width="1"/><path d="M99 341.38 H101" stroke="#a8a8a8" stroke-width="1"/><path d="M99 346.60 H101" stroke="#a8a8a8" stroke-width="1"/><path d="M99 351.83 H101" stroke="#a8a8a8" stroke-width="1"/><path d="M97 357.06 H101" stroke="#b0b0b0" stroke-width="1"/><path d="M99 362.29 H101" stroke="#a8a8a8" stroke-width="1"/><path d="M99 367.52 H101" stroke="#a8a8a8" stroke-width="1"/><path d="M99 372.74 H101" stroke="#a8a8a8" stroke-width="1"/><path d="M99 377.97 H101" stroke="#a8a8a8" stroke-width="1"/><path d="M88 383.20 H101" stroke="#c8c8c8" stroke-width="1"/><path d="M99 388.43 H101" stroke="#a8a8a8" stroke-width="1"/><path d="M99 393.66 H101" stroke="#a8a8a8" stroke-width="1"/><path d="M99 398.88 H101" stroke="#a8a8a8" stroke-width="1"/><path d="M99 404.11 H101" stroke="#a8a8a8" stroke-width="1"/><path d="M97 409.34 H101" stroke="#b0b0b0" stroke-width="1"/><path d="M99 414.57 H101" stroke="#a8a8a8" stroke-width="1"/><path d="M99 419.80 H101" stroke="#a8a8a8" stroke-width="1"/><path d="M99 425.02 H101" stroke="#a8a8a8" stroke-width="1"/><path d="M99 430.25 H101" stroke="#a8a8a8" stroke-width="1"/><path d="M88 435.48 H101" stroke="#c8c8c8" stroke-width="1"/><path d="M99 440.71 H101" stroke="#a8a8a8" stroke-width="1"/><path d="M99 445.94 H101" stroke="#a8a8a8" stroke-width="1"/><path d="M99 451.16 H101" stroke="#a8a8a8" stroke-width="1"/><path d="M99 456.39 H101" stroke="#a8a8a8" stroke-width="1"/><path d="M97 461.62 H101" stroke="#b0b0b0" stroke-width="1"/><path d="M99 466.85 H101" stroke="#a8a8a8" stroke-width="1"/><path d="M99 472.08 H101" stroke="#a8a8a8" stroke-width="1"/><path d="M99 477.30 H101" stroke="#a8a8a8" stroke-width="1"/><path d="M99 482.53 H101" stroke="#a8a8a8" stroke-width="1"/><path d="M88 487.76 H101" stroke="#c8c8c8" stroke-width="1"/><path d="M99 492.99 H101" stroke="#a8a8a8" stroke-width="1"/><path d="M99 498.22 H101" stroke="#a8a8a8" stroke-width="1"/><path d="M99 503.44 H101" stroke="#a8a8a8" stroke-width="1"/><path d="M99 508.67 H101" stroke="#a8a8a8" stroke-width="1"/><path d="M97 513.90 H101" stroke="#b0b0b0" stroke-width="1"/><path d="M99 519.13 H101" stroke="#a8a8a8" stroke-width="1"/><path d="M99 524.36 H101" stroke="#a8a8a8" stroke-width="1"/><path d="M99 529.58 H101" stroke="#a8a8a8" stroke-width="1"/><path d="M99 534.81 H101" stroke="#a8a8a8" stroke-width="1"/><path d="M88 540.04 H101" stroke="#c8c8c8" stroke-width="1"/><path d="M99 545.27 H101" stroke="#a8a8a8" stroke-width="1"/><path d="M99 550.50 H101" stroke="#a8a8a8" stroke-width="1"/><path d="M99 555.72 H101" stroke="#a8a8a8" stroke-width="1"/><path d="M99 560.95 H101" stroke="#a8a8a8" stroke-width="1"/><path d="M97 566.18 H101" stroke="#b0b0b0" stroke-width="1"/><path d="M99 571.41 H101" stroke="#a8a8a8" stroke-width="1"/><path d="M99 576.64 H101" stroke="#a8a8a8" stroke-width="1"/><path d="M99 581.86 H101" stroke="#a8a8a8" stroke-width="1"/><path d="M99 587.09 H101" stroke="#a8a8a8" stroke-width="1"/><path d="M88 592.32 H101" stroke="#c8c8c8" stroke-width="1"/><path d="M99 597.55 H101" stroke="#a8a8a8" stroke-width="1"/><path d="M99 602.78 H101" stroke="#a8a8a8" stroke-width="1"/><path d="M99 608.00 H101" stroke="#a8a8a8" stroke-width="1"/><path d="M99 613.23 H101" stroke="#a8a8a8" stroke-width="1"/><path d="M97 618.46 H101" stroke="#b0b0b0" stroke-width="1"/><path d="M99 623.69 H101" stroke="#a8a8a8" stroke-width="1"/><path d="M99 628.92 H101" stroke="#a8a8a8" stroke-width="1"/><path d="M99 634.14 H101" stroke="#a8a8a8" stroke-width="1"/><path d="M99 639.37 H101" stroke="#a8a8a8" stroke-width="1"/><path d="M88 644.60 H101" stroke="#c8c8c8" stroke-width="1"/><path d="M99 649.83 H101" stroke="#a8a8a8" stroke-width="1"/><path d="M99 655.06 H101" stroke="#a8a8a8" stroke-width="1"/><path d="M99 660.28 H101" stroke="#a8a8a8" stroke-width="1"/><path d="M99 665.51 H101" stroke="#a8a8a8" stroke-width="1"/><path d="M97 670.74 H101" stroke="#b0b0b0" stroke-width="1"/><path d="M99 675.97 H101" stroke="#a8a8a8" stroke-width="1"/><path d="M99 681.20 H101" stroke="#a8a8a8" stroke-width="1"/><path d="M99 686.42 H101" stroke="#a8a8a8" stroke-width="1"/><path d="M99 691.65 H101" stroke="#a8a8a8" stroke-width="1"/><path d="M88 696.88 H101" stroke="#c8c8c8" stroke-width="1"/><path d="M99 702.11 H101" stroke="#a8a8a8" stroke-width="1"/><path d="M99 707.34 H101" stroke="#a8a8a8" stroke-width="1"/><path d="M99 712.56 H101" stroke="#a8a8a8" stroke-width="1"/><path d="M99 717.79 H101" stroke="#a8a8a8" stroke-width="1"/><path d="M97 723.02 H101" stroke="#b0b0b0" stroke-width="1"/></svg>
<div class="a" style="left:88px;top:90px;width:14px;height:634px;overflow:hidden">
<div class="t" style="left:1.3px;top:-4.2px;font-size:9.4px;color:#ececec">0</div>
<div class="t" style="left:1.3px;top:32.3px;font-size:9.4px;color:#ececec">0</div>
<div class="t" style="left:1.3px;top:84.6px;font-size:9.4px;color:#ececec">1</div>
<div class="t" style="left:1.3px;top:92.5px;font-size:9.4px;color:#ececec">0</div>
<div class="t" style="left:1.3px;top:100.4px;font-size:9.4px;color:#ececec">0</div>
<div class="t" style="left:1.3px;top:136.9px;font-size:9.4px;color:#ececec">2</div>
<div class="t" style="left:1.3px;top:144.8px;font-size:9.4px;color:#ececec">0</div>
<div class="t" style="left:1.3px;top:152.7px;font-size:9.4px;color:#ececec">0</div>
<div class="t" style="left:1.3px;top:189.1px;font-size:9.4px;color:#ececec">3</div>
<div class="t" style="left:1.3px;top:197.0px;font-size:9.4px;color:#ececec">0</div>
<div class="t" style="left:1.3px;top:204.9px;font-size:9.4px;color:#ececec">0</div>
<div class="t" style="left:1.3px;top:241.4px;font-size:9.4px;color:#ececec">4</div>
<div class="t" style="left:1.3px;top:249.3px;font-size:9.4px;color:#ececec">0</div>
<div class="t" style="left:1.3px;top:257.2px;font-size:9.4px;color:#ececec">0</div>
<div class="t" style="left:1.3px;top:293.7px;font-size:9.4px;color:#ececec">5</div>
<div class="t" style="left:1.3px;top:301.6px;font-size:9.4px;color:#ececec">0</div>
<div class="t" style="left:1.3px;top:309.5px;font-size:9.4px;color:#ececec">0</div>
<div class="t" style="left:1.3px;top:346.0px;font-size:9.4px;color:#ececec">6</div>
<div class="t" style="left:1.3px;top:353.9px;font-size:9.4px;color:#ececec">0</div>
<div class="t" style="left:1.3px;top:361.8px;font-size:9.4px;color:#ececec">0</div>
<div class="t" style="left:1.3px;top:398.3px;font-size:9.4px;color:#ececec">7</div>
<div class="t" style="left:1.3px;top:406.2px;font-size:9.4px;color:#ececec">0</div>
<div class="t" style="left:1.3px;top:414.1px;font-size:9.4px;color:#ececec">0</div>
<div class="t" style="left:1.3px;top:450.5px;font-size:9.4px;color:#ececec">8</div>
<div class="t" style="left:1.3px;top:458.4px;font-size:9.4px;color:#ececec">0</div>
<div class="t" style="left:1.3px;top:466.3px;font-size:9.4px;color:#ececec">0</div>
<div class="t" style="left:1.3px;top:502.8px;font-size:9.4px;color:#ececec">9</div>
<div class="t" style="left:1.3px;top:510.7px;font-size:9.4px;color:#ececec">0</div>
<div class="t" style="left:1.3px;top:518.6px;font-size:9.4px;color:#ececec">0</div>
<div class="t" style="left:1.3px;top:555.1px;font-size:9.4px;color:#ececec">1</div>
<div class="t" style="left:1.3px;top:563.0px;font-size:9.4px;color:#ececec">0</div>
<div class="t" style="left:1.3px;top:570.9px;font-size:9.4px;color:#ececec">0</div>
<div class="t" style="left:1.3px;top:578.8px;font-size:9.4px;color:#ececec">0</div>
<div class="t" style="left:1.3px;top:607.4px;font-size:9.4px;color:#ececec">1</div>
<div class="t" style="left:1.3px;top:615.3px;font-size:9.4px;color:#ececec">1</div>
<div class="t" style="left:1.3px;top:623.2px;font-size:9.4px;color:#ececec">0</div>
<div class="t" style="left:1.3px;top:631.1px;font-size:9.4px;color:#ececec">0</div>
<div class="t" style="left:1.3px;top:659.7px;font-size:9.4px;color:#ececec">1</div>
</div>
<div class="a" style="left:102px;top:90px;width:1008px;height:665px;background:#5f5f5f;"></div>
<div class="a" style="left:102px;top:725px;width:1008px;height:30px;background:#5c5c5c;"></div>
<div class="a" style="left:88px;top:724px;width:1022px;height:1px;background:#6c6c6c;"></div>
<div class="a" style="left:105px;top:123px;width:1003.5px;height:565.5px;background:#0a0a0a;"></div>
<div class="a" style="left:104.4px;top:121.8px;width:1002.2px;height:564.4px;background:#ffffff;"></div>
<div class="a" style="left:122.2px;top:140px;width:966px;height:1px;background:#d49ade;"></div>
<div class="a" style="left:122.2px;top:667.5px;width:966px;height:1px;background:#d49ade;"></div>
<div class="a" style="left:122.2px;top:140px;width:1px;height:528.5px;background:#a47ccc;"></div>
<div class="a" style="left:1087.7px;top:140px;width:1px;height:528.5px;background:#a47ccc;"></div>
<div class="a" style="left:368.2px;top:210.2px;width:501.2px;height:401.6px;background:#04236d;"></div>
<div class="a" style="left:365.5px;top:207.3px;width:6.4px;height:6.4px;background:#ffffff;border:1px solid #8a949e"></div>
<div class="a" style="left:866.5px;top:207.3px;width:6.4px;height:6.4px;background:#ffffff;border:1px solid #8a949e"></div>
<div class="a" style="left:365.5px;top:408.2px;width:6.4px;height:6.4px;background:#ffffff;border:1px solid #8a949e"></div>
<div class="a" style="left:866.5px;top:408.2px;width:6.4px;height:6.4px;background:#ffffff;border:1px solid #8a949e"></div>
<div class="a" style="left:615.8px;top:207.3px;width:6.4px;height:6.4px;background:#ffffff;border:1px solid #8a949e"></div>
<div class="a" style="left:365.5px;top:608.8px;width:6.4px;height:6.4px;background:#ffffff;border:1px solid #8a949e"></div>
<div class="a" style="left:615.8px;top:608.8px;width:6.4px;height:6.4px;background:#ffffff;border:1px solid #8a949e"></div>
<div class="a" style="left:866.5px;top:608.8px;width:6.4px;height:6.4px;background:#ffffff;border:1px solid #8a949e"></div>
<div class="a" style="left:766px;top:207.8px;width:6.4px;height:6.4px;background:#4a90f0;border:1px solid #2a5ab8"></div>
<div class="a" style="left:866.5px;top:229px;width:6.4px;height:6.4px;background:#ffd800;border:1px solid #a89820"></div>
<svg style="left:374.2px;top:207.6px;" width="15" height="8" viewBox="0 0 15 8"><rect x="0.7" y="0.7" width="13.4" height="6.4" rx="3.2" fill="#ffffff" stroke="#2a6fe0" stroke-width="1.4"/><rect x="3" y="2.5" width="4.8" height="2.8" rx="1.4" fill="none" stroke="#2a6fe0" stroke-width="1.1"/><rect x="7" y="2.5" width="4.8" height="2.8" rx="1.4" fill="none" stroke="#2a6fe0" stroke-width="1.1"/></svg>
<div class="a" style="left:88px;top:755px;width:1022px;height:15px;background:#5a5a5a;"></div>
<div class="a" style="left:541px;top:755px;width:582px;height:15px;background:#4b4b4b;"></div>
<div class="a" style="left:725px;top:757px;width:183px;height:12px;background:#6b6b6b;border-radius:6px"></div>
<div class="t" style="left:100px;top:758.5px;font-size:10px;color:#e2e2e2;font-weight:400;letter-spacing:-0.2px;">44,25%</div>
<svg style="left:136px;top:760px;" width="9" height="6" viewBox="0 0 9 6"><path d="M1 1 L4.5 4.5 L8 1" fill="none" stroke="#cfcfcf" stroke-width="1.2"/></svg>
<svg style="left:154px;top:758px;" width="30" height="10" viewBox="0 0 30 10"><path d="M1.5 1 V9" stroke="#8a8a8a" stroke-width="1.4"/><path d="M8.5 1 L3 5 L8.5 9 Z" fill="#8a8a8a"/><path d="M27 1.2 L22 5 L27 8.8 Z" fill="#8a8a8a"/></svg>
<div class="a" style="left:192px;top:755.5px;width:79px;height:14px;background:#4a4a4a;border:1px solid #707070;border-radius:2px"></div>
<div class="a" style="left:255px;top:756px;width:1px;height:13px;background:#707070;"></div>
<div class="t" style="left:195px;top:758.5px;font-size:10px;color:#e8e8e8;font-weight:400;letter-spacing:0px;">1</div>
<svg style="left:258px;top:759.5px;" width="9" height="6" viewBox="0 0 9 6"><path d="M1 1 L4.5 4.5 L8 1" fill="none" stroke="#d6d6d6" stroke-width="1.2"/></svg>
<svg style="left:281px;top:758px;" width="30" height="10" viewBox="0 0 30 10"><path d="M2 1.2 L7 5 L2 8.8 Z" fill="#8a8a8a"/><path d="M20.5 1 L26 5 L20.5 9 Z" fill="#8a8a8a"/><path d="M27.5 1 V9" stroke="#8a8a8a" stroke-width="1.4"/></svg>
<svg style="left:320px;top:756px;" width="16" height="14" viewBox="0 0 16 14"><path d="M6.5 12.5 A5.5 5.5 0 1 1 12 7" fill="none" stroke="#d6d6d6" stroke-width="2.2"/><path d="M6.5 2 V7 H12" fill="none" stroke="#d6d6d6" stroke-width="1.2"/><rect x="13" y="10.8" width="1.6" height="1.4" fill="#d6d6d6"/></svg>
<div class="t" style="left:349px;top:758.5px;font-size:10px;color:#e2e2e2;font-weight:400;letter-spacing:-0.25px;">[Basic] (working)</div>
<svg style="left:439px;top:760px;" width="9" height="6" viewBox="0 0 9 6"><path d="M1 1 L4.5 4.5 L8 1" fill="none" stroke="#cfcfcf" stroke-width="1.2"/></svg>
<div class="a" style="left:461px;top:758.5px;width:9px;height:9px;background:#3cb44a;border-radius:50%"></div>
<div class="t" style="left:475px;top:758.5px;font-size:10px;color:#e8e8e8;font-weight:400;letter-spacing:-0.2px;">No errors</div>
<svg style="left:530px;top:760px;" width="9" height="6" viewBox="0 0 9 6"><path d="M1 1 L4.5 4.5 L8 1" fill="none" stroke="#cfcfcf" stroke-width="1.2"/></svg>
<svg style="left:1094px;top:757.5px;" width="14" height="11" viewBox="0 0 14 11"><rect x="0.7" y="0.7" width="12.6" height="9.6" fill="none" stroke="#cfcfcf" stroke-width="1.3"/><path d="M7 0.7 V10.3" stroke="#cfcfcf" stroke-width="1.3"/></svg>
<div class="a" style="left:1110px;top:90px;width:13px;height:665px;background:#4e4e4e;"></div>
<div class="a" style="left:1111.5px;top:115px;width:11px;height:641px;background:#6a6a6a;border-radius:6px"></div>
<div class="a" style="left:1110px;top:755px;width:13px;height:15px;background:#4b4b4b;"></div>
<div class="a" style="left:1123px;top:51px;width:2.6px;height:719px;background:#3a3a3a;"></div>
<div class="a" style="left:1125px;top:51px;width:224px;height:11px;background:#464646;"></div>
<svg style="left:1336.5px;top:53px;" width="8" height="6" viewBox="0 0 8 6"><path d="M0.8 0.8 L3 3 L0.8 5.2 M4.6 0.8 L6.8 3 L4.6 5.2" fill="none" stroke="#b4b4b4" stroke-width="1.1"/></svg>
<div class="a" style="left:1125px;top:62px;width:224px;height:24px;background:#484848;"></div>
<div class="a" style="left:1125px;top:62px;width:72px;height:24px;background:#535353;"></div>
<div class="a" style="left:1197px;top:62px;width:1px;height:24px;background:#3e3e3e;"></div>
<div class="a" style="left:1241px;top:62px;width:1px;height:24px;background:#3e3e3e;"></div>
<div class="a" style="left:1313px;top:62px;width:1px;height:24px;background:#3e3e3e;"></div>
<div class="t" style="left:1136.4px;top:70.42px;font-size:10.3px;color:#f2f2f2;font-weight:700;transform:scaleX(1.001);transform-origin:0 0;">Properties</div>
<div class="t" style="left:1208.4px;top:70.42px;font-size:10.3px;color:#c4c4c4;font-weight:700;transform:scaleX(0.929);transform-origin:0 0;">Pages</div>
<div class="t" style="left:1251.4px;top:70.42px;font-size:10.3px;color:#c4c4c4;font-weight:700;transform:scaleX(0.993);transform-origin:0 0;">CC Libraries</div>
<div class="t" style="left:1134.6px;top:96.47px;font-size:10.6px;color:#ececec;font-weight:400;transform:scaleX(0.886);transform-origin:0 0;">Linked File</div>
<div class="a" style="left:1125px;top:114.5px;width:224px;height:1.5px;background:#474747;"></div>
<div class="t" style="left:1134.8px;top:126.47px;font-size:10.6px;color:#ececec;font-weight:400;transform:scaleX(0.919);transform-origin:0 0;">Transform</div>
<svg style="left:1139.4px;top:153.5px;" width="23" height="23" viewBox="0 0 23 23"><rect x="0.6" y="0.6" width="5.6" height="5.6" rx="0.6" fill="#f4f4f4" stroke="#d0d0d0" stroke-width="1.1"/><rect x="8.5" y="0.6" width="5.6" height="5.6" rx="0.6" fill="#2e2e2e" stroke="#d0d0d0" stroke-width="1.1"/><rect x="16.4" y="0.6" width="5.6" height="5.6" rx="0.6" fill="#2e2e2e" stroke="#d0d0d0" stroke-width="1.1"/><rect x="0.6" y="8.5" width="5.6" height="5.6" rx="0.6" fill="#2e2e2e" stroke="#d0d0d0" stroke-width="1.1"/><rect x="8.5" y="8.5" width="5.6" height="5.6" rx="0.6" fill="#2e2e2e" stroke="#d0d0d0" stroke-width="1.1"/><rect x="16.4" y="8.5" width="5.6" height="5.6" rx="0.6" fill="#2e2e2e" stroke="#d0d0d0" stroke-width="1.1"/><rect x="0.6" y="16.4" width="5.6" height="5.6" rx="0.6" fill="#2e2e2e" stroke="#d0d0d0" stroke-width="1.1"/><rect x="8.5" y="16.4" width="5.6" height="5.6" rx="0.6" fill="#2e2e2e" stroke="#d0d0d0" stroke-width="1.1"/><rect x="16.4" y="16.4" width="5.6" height="5.6" rx="0.6" fill="#2e2e2e" stroke="#d0d0d0" stroke-width="1.1"/><path d="M6.2 3.4 H8.5" stroke="#d0d0d0" stroke-width="1.2"/><path d="M6.2 19.2 H8.5" stroke="#d0d0d0" stroke-width="1.2"/><path d="M14.1 3.4 H16.4" stroke="#d0d0d0" stroke-width="1.2"/><path d="M14.1 19.2 H16.4" stroke="#d0d0d0" stroke-width="1.2"/><path d="M3.4 6.2 V8.5" stroke="#d0d0d0" stroke-width="1.2"/><path d="M19.2 6.2 V8.5" stroke="#d0d0d0" stroke-width="1.2"/><path d="M3.4 14.1 V16.4" stroke="#d0d0d0" stroke-width="1.2"/><path d="M19.2 14.1 V16.4" stroke="#d0d0d0" stroke-width="1.2"/></svg>
<div class="t" style="left:1175.7px;top:147.57px;font-size:10.6px;color:#e2e2e2;font-weight:400;transform:scaleX(0.749);transform-origin:0 0;">X:</div>
<div class="a" style="left:1187px;top:144.5px;width:48.7px;height:17.2px;background:#464646;border:1px solid #6c6c6c;border-radius:2px"></div>
<div class="t" style="left:1191.5px;top:147.57px;font-size:10.6px;color:#ececec;font-weight:400;transform:scaleX(0.943);transform-origin:0 0;">506 px</div>
<div class="t" style="left:1175.7px;top:169.77px;font-size:10.6px;color:#e2e2e2;font-weight:400;transform:scaleX(0.795);transform-origin:0 0;">Y:</div>
<div class="a" style="left:1187px;top:166.7px;width:48.7px;height:17.5px;background:#464646;border:1px solid #6c6c6c;border-radius:2px"></div>
<div class="t" style="left:1191.5px;top:169.77px;font-size:10.6px;color:#ececec;font-weight:400;transform:scaleX(0.943);transform-origin:0 0;">170 px</div>
<div class="t" style="left:1245.5px;top:147.57px;font-size:10.6px;color:#e2e2e2;font-weight:400;transform:scaleX(0.823);transform-origin:0 0;">W:</div>
<div class="a" style="left:1258.2px;top:144.5px;width:48.8px;height:17.2px;background:#464646;border:1px solid #6c6c6c;border-radius:2px"></div>
<div class="t" style="left:1262.7px;top:147.57px;font-size:10.6px;color:#ececec;font-weight:400;transform:scaleX(0.943);transform-origin:0 0;">960 px</div>
<div class="t" style="left:1246px;top:169.77px;font-size:10.6px;color:#e2e2e2;font-weight:400;transform:scaleX(0.755);transform-origin:0 0;">H:</div>
<div class="a" style="left:1258.2px;top:166.7px;width:48.8px;height:17.5px;background:#464646;border:1px solid #6c6c6c;border-radius:2px"></div>
<div class="t" style="left:1262.7px;top:169.77px;font-size:10.6px;color:#ececec;font-weight:400;transform:scaleX(0.943);transform-origin:0 0;">768 px</div>
<svg style="left:1313px;top:157px;" width="16" height="16" viewBox="0 0 16 16"><rect x="4.9" y="2.4" width="4.8" height="11.6" rx="2.4" fill="none" stroke="#d4d4d4" stroke-width="1.3"/><path d="M6.2 8.2 L8.4 8.2" stroke="#d4d4d4" stroke-width="1"/><path d="M1.8 2.3 L13 13.6" stroke="#d4d4d4" stroke-width="1.4"/></svg>
<svg style="left:1324.6px;top:196.5px;" width="13" height="4" viewBox="0 0 13 4"><circle cx="1.6" cy="1.8" r="1.6" fill="#dcdcdc"/><circle cx="6.4" cy="1.8" r="1.6" fill="#dcdcdc"/><circle cx="11.2" cy="1.8" r="1.6" fill="#dcdcdc"/></svg>
<div class="a" style="left:1125px;top:209.5px;width:224px;height:1.5px;background:#474747;"></div>
<div class="t" style="left:1134.3px;top:221.57px;font-size:10.6px;color:#ececec;font-weight:400;transform:scaleX(0.883);transform-origin:0 0;">Appearance</div>
<svg style="left:1134.8px;top:239.9px;" width="16" height="15" viewBox="0 0 16 15"><rect x="0.5" y="0.5" width="15" height="14" fill="#f6f6f6" stroke="#333" stroke-width="1"/><path d="M1.2 14 L14.8 1" stroke="#d41515" stroke-width="1.6"/></svg>
<div class="t" style="left:1159.7px;top:244.47px;font-size:10.6px;color:#e8e8e8;font-weight:400;transform:scaleX(0.842);transform-origin:0 0;">Fill</div>
<svg style="left:1134.8px;top:262.7px;" width="16" height="15" viewBox="0 0 16 15"><rect x="0.5" y="0.5" width="15" height="14" fill="#f6f6f6" stroke="#333" stroke-width="1"/><rect x="3.5" y="3.5" width="9" height="8" fill="#3c3c3c"/><path d="M1.2 14 L14.8 1" stroke="#d41515" stroke-width="1.6"/></svg>
<div class="t" style="left:1159.3px;top:268.02px;font-size:10.3px;color:#e8e8e8;font-weight:400;transform:scaleX(0.894);transform-origin:0 0;text-decoration:underline;text-underline-offset:1.5px">Stroke</div>
<svg style="left:1135.6px;top:287px;" width="14" height="14" viewBox="0 0 14 14"><path d="M5 1.6 H9 M5 12.4 H9 M1.6 5 V9 M12.4 5 V9" stroke="#a0a0a0" stroke-width="0.9" stroke-dasharray="1.2 1"/><rect x="0" y="0" width="3.5" height="3.5" fill="#3d8ef0"/><rect x="10.5" y="0" width="3.5" height="3.5" fill="#3d8ef0"/><rect x="0" y="10.5" width="3.5" height="3.5" fill="#3d8ef0"/><rect x="10.5" y="10.5" width="3.5" height="3.5" fill="#3d8ef0"/></svg>
<div class="t" style="left:1159.3px;top:291.02px;font-size:10.3px;color:#e8e8e8;font-weight:400;transform:scaleX(0.937);transform-origin:0 0;text-decoration:underline;text-underline-offset:1.5px">Corner</div>
<svg style="left:1136px;top:310.1px;" width="13" height="13" viewBox="0 0 13 13"><rect x="0.0" y="0.0" width="2.6" height="2.6" fill="#e8e8e8"/><rect x="2.6" y="0.0" width="2.6" height="2.6" fill="#2a2a2a"/><rect x="5.2" y="0.0" width="2.6" height="2.6" fill="#e8e8e8"/><rect x="7.8" y="0.0" width="2.6" height="2.6" fill="#2a2a2a"/><rect x="10.4" y="0.0" width="2.6" height="2.6" fill="#e8e8e8"/><rect x="0.0" y="2.6" width="2.6" height="2.6" fill="#2a2a2a"/><rect x="2.6" y="2.6" width="2.6" height="2.6" fill="#e8e8e8"/><rect x="5.2" y="2.6" width="2.6" height="2.6" fill="#2a2a2a"/><rect x="7.8" y="2.6" width="2.6" height="2.6" fill="#e8e8e8"/><rect x="10.4" y="2.6" width="2.6" height="2.6" fill="#2a2a2a"/><rect x="0.0" y="5.2" width="2.6" height="2.6" fill="#e8e8e8"/><rect x="2.6" y="5.2" width="2.6" height="2.6" fill="#2a2a2a"/><rect x="5.2" y="5.2" width="2.6" height="2.6" fill="#e8e8e8"/><rect x="7.8" y="5.2" width="2.6" height="2.6" fill="#2a2a2a"/><rect x="10.4" y="5.2" width="2.6" height="2.6" fill="#e8e8e8"/><rect x="0.0" y="7.8" width="2.6" height="2.6" fill="#2a2a2a"/><rect x="2.6" y="7.8" width="2.6" height="2.6" fill="#e8e8e8"/><rect x="5.2" y="7.8" width="2.6" height="2.6" fill="#2a2a2a"/><rect x="7.8" y="7.8" width="2.6" height="2.6" fill="#e8e8e8"/><rect x="10.4" y="7.8" width="2.6" height="2.6" fill="#2a2a2a"/><rect x="0.0" y="10.4" width="2.6" height="2.6" fill="#e8e8e8"/><rect x="2.6" y="10.4" width="2.6" height="2.6" fill="#2a2a2a"/><rect x="5.2" y="10.4" width="2.6" height="2.6" fill="#e8e8e8"/><rect x="7.8" y="10.4" width="2.6" height="2.6" fill="#2a2a2a"/><rect x="10.4" y="10.4" width="2.6" height="2.6" fill="#e8e8e8"/><rect x="0" y="0" width="13" height="13" fill="none" stroke="#cfcfcf" stroke-width="0.8"/></svg>
<div class="t" style="left:1159.3px;top:312.42px;font-size:10.3px;color:#e8e8e8;font-weight:400;transform:scaleX(0.934);transform-origin:0 0;text-decoration:underline;text-underline-offset:1.5px">Opacity</div>
<svg style="left:1138.7px;top:335.9px;" width="13" height="12" viewBox="0 0 13 12"><rect x="0.6" y="0.6" width="9.8" height="9.8" fill="none" stroke="#cfcfcf" stroke-width="1.1" stroke-dasharray="1.6 1"/><rect x="11.2" y="9.8" width="1.4" height="1.4" fill="#cfcfcf"/></svg>
<div class="t" style="left:1160.3px;top:335.6px;font-size:11.5px;color:#d8d8d8;font-weight:400;letter-spacing:-0.3px;"><i>fx</i></div>
<div class="a" style="left:1171.6px;top:344.8px;width:1.6px;height:1.6px;background:#d0d0d0;"></div>
<div class="a" style="left:1214.6px;top:262.1px;width:61px;height:18.3px;background:#464646;border:1px solid #6c6c6c;border-radius:2px"></div>
<div class="a" style="left:1229.2px;top:263px;width:1px;height:16.5px;background:#6c6c6c;"></div>
<div class="a" style="left:1259.6px;top:263px;width:1px;height:16.5px;background:#6c6c6c;"></div>
<svg style="left:1215px;top:262px;" width="60" height="19" viewBox="0 0 60 19"><path d="M3.7 6.6 L6.7 3.5999999999999996 L9.7 6.6" fill="none" stroke="#d0d0d0" stroke-width="1.1"/><path d="M3.7 11.6 L6.7 14.6 L9.7 11.6" fill="none" stroke="#d0d0d0" stroke-width="1.1"/><path d="M49.4 7.8 L52.4 10.799999999999999 L55.4 7.8" fill="none" stroke="#d0d0d0" stroke-width="1.1"/></svg>
<div class="t" style="left:1232.9px;top:268.42px;font-size:10.3px;color:#ececec;font-weight:400;transform:scaleX(0.978);transform-origin:0 0;">0 pt</div>
<div class="a" style="left:1281.1px;top:262.9px;width:31.5px;height:17px;background:#ececec;"></div>
<div class="a" style="left:1285px;top:268.7px;width:19.5px;height:6px;background:#000000;"></div>
<div class="a" style="left:1312.6px;top:262.1px;width:15.7px;height:18.3px;background:#464646;border:1px solid #6c6c6c;border-radius:2px"></div>
<svg style="left:1313px;top:262px;" width="15" height="19" viewBox="0 0 15 19"><path d="M4.6 7.7 L7.6 10.7 L10.6 7.7" fill="none" stroke="#d0d0d0" stroke-width="1.1"/></svg>
<div class="a" style="left:1214.6px;top:285.2px;width:61px;height:18.5px;background:#464646;border:1px solid #6c6c6c;border-radius:2px"></div>
<div class="a" style="left:1229.2px;top:286px;width:1px;height:17px;background:#6c6c6c;"></div>
<svg style="left:1215px;top:285px;" width="60" height="19" viewBox="0 0 60 19"><path d="M3.7 6.6 L6.7 3.5999999999999996 L9.7 6.6" fill="none" stroke="#d0d0d0" stroke-width="1.1"/><path d="M3.7 11.6 L6.7 14.6 L9.7 11.6" fill="none" stroke="#d0d0d0" stroke-width="1.1"/></svg>
<div class="t" style="left:1233.9px;top:289.62px;font-size:10.3px;color:#ececec;font-weight:400;transform:scaleX(0.968);transform-origin:0 0;">12 px</div>
<div class="a" style="left:1281.1px;top:286px;width:31.5px;height:17.2px;background:#ececec;"></div>
<svg style="left:1281.1px;top:286px;" width="31.5" height="17.2" viewBox="0 0 31.5 17.2"><rect x="2" y="4.5" width="22" height="12" fill="#d8d8d8"/><path d="M2 3.2 H24.3 V15" fill="none" stroke="#000" stroke-width="1.6"/></svg>
<div class="a" style="left:1312.6px;top:285.2px;width:15.7px;height:18.5px;background:#464646;border:1px solid #6c6c6c;border-radius:2px"></div>
<svg style="left:1313px;top:285px;" width="15" height="19" viewBox="0 0 15 19"><path d="M4.6 8.0 L7.6 11.0 L10.6 8.0" fill="none" stroke="#d0d0d0" stroke-width="1.1"/></svg>
<div class="a" style="left:1214.6px;top:308.6px;width:61px;height:18.5px;background:#464646;border:1px solid #6c6c6c;border-radius:2px"></div>
<div class="a" style="left:1259.6px;top:309.4px;width:1px;height:17px;background:#6c6c6c;"></div>
<svg style="left:1260px;top:309px;" width="15" height="18" viewBox="0 0 15 18"><path d="M6 6 L9 9 L6 12" fill="none" stroke="#d0d0d0" stroke-width="1.1"/></svg>
<div class="t" style="left:1218.2px;top:313.02px;font-size:10.3px;color:#ececec;font-weight:400;transform:scaleX(0.846);transform-origin:0 0;">100%</div>
<div class="a" style="left:1125px;top:357.5px;width:224px;height:1.5px;background:#474747;"></div>
<div class="t" style="left:1134.25px;top:369.47px;font-size:10.6px;color:#ececec;font-weight:400;transform:scaleX(0.925);transform-origin:0 0;">Align</div>
<svg style="left:1125px;top:380px" width="224" height="40" viewBox="1125 380 224 40">
<rect x="1139.3" y="391.8" width="12" height="12" fill="none" stroke="#cfcfcf" stroke-width="1.1" stroke-dasharray="1.6 1.2"/>
<path d="M1153 402 L1157 402 L1155 404.5 Z" fill="#cfcfcf"/>
<rect x="1164.3" y="386" width="1" height="22" fill="#474747"/>
<rect x="1169.6" y="389.7" width="1.2" height="16" fill="#cfcfcf"/>
<rect x="1172" y="392" width="6.5" height="4.5" fill="#cfcfcf"/><rect x="1172" y="399" width="11" height="4.5" fill="#cfcfcf"/>
<rect x="1203.9" y="389.7" width="1.2" height="16" fill="#cfcfcf"/>
<rect x="1200.8" y="392" width="7.5" height="4.5" fill="#cfcfcf"/><rect x="1199" y="399" width="12" height="4.5" fill="#cfcfcf"/>
<rect x="1240.1" y="389.7" width="1.2" height="16" fill="#cfcfcf"/>
<rect x="1232" y="392" width="6.5" height="4.5" fill="#cfcfcf"/><rect x="1227.5" y="399" width="11" height="4.5" fill="#cfcfcf"/>
<rect x="1254.2" y="390.3" width="15.6" height="1.2" fill="#cfcfcf"/>
<rect x="1257" y="392.5" width="4.5" height="11.5" fill="#cfcfcf"/><rect x="1263.5" y="392.5" width="4.5" height="7" fill="#cfcfcf"/>
<rect x="1282.2" y="396.6" width="15.8" height="1.2" fill="#cfcfcf"/>
<rect x="1284.6" y="390.5" width="4.5" height="13.5" fill="#cfcfcf"/><rect x="1291" y="393.3" width="5" height="8" fill="#cfcfcf"/>
<rect x="1310.7" y="404.2" width="15.8" height="1.2" fill="#cfcfcf"/>
<rect x="1313.6" y="391" width="4.5" height="12" fill="#cfcfcf"/><rect x="1319.6" y="396" width="4.8" height="7" fill="#cfcfcf"/>
</svg>
<div class="a" style="left:1125px;top:413px;width:224px;height:1.5px;background:#474747;"></div>
<div class="t" style="left:1134.8px;top:425.67px;font-size:10.6px;color:#ececec;font-weight:400;transform:scaleX(0.909);transform-origin:0 0;">Text Wrap</div>
<svg style="left:1125px;top:440px" width="224" height="30" viewBox="1125 440 224 30">
<rect x="1135.2" y="444.2" width="19.5" height="18.6" rx="2" fill="#2e2e2e"/>
<path d="M1139 447.8 H1151.5 M1139 459.3 H1151.5 M1139 450.6 H1141.5 M1149 450.6 H1151.5 M1139 453.5 H1141.5 M1149 453.5 H1151.5 M1139 456.4 H1141.5 M1149 456.4 H1151.5" stroke="#d4d4d4" stroke-width="1.2"/>
<rect x="1142.5" y="450" width="6" height="6.8" fill="#bdbdbd"/>
<path d="M1165.3 447.8 H1178 M1165.3 459.5 H1178 M1165.3 450.6 H1167.6 M1175.7 450.6 H1178 M1165.3 453.5 H1167.6 M1175.7 453.5 H1178 M1165.3 456.4 H1167.6 M1175.7 456.4 H1178" stroke="#cfcfcf" stroke-width="1.2"/>
<rect x="1169.6" y="449.6" width="4" height="8.4" fill="#3a3a3a" stroke="#cfcfcf" stroke-width="1"/>
<path d="M1192.5 447.5 H1205 M1192.5 450.5 H1196 M1192.5 453.5 H1195 M1192.5 456.5 H1195 M1192.5 459.5 H1205" stroke="#cfcfcf" stroke-width="1.1"/>
<circle cx="1198.6" cy="453.8" r="3.8" fill="#cfcfcf"/>
<circle cx="1203" cy="449" r="3.2" fill="#2a7cf0"/>
<path d="M1218.5 448 H1231.2 M1218.5 457.5 H1231.2 M1218.5 460 H1231.2" stroke="#cfcfcf" stroke-width="1.1"/>
<rect x="1222" y="450" width="6" height="5" fill="#cfcfcf"/>
<path d="M1244.7 447.8 H1257.5 M1244.7 450.3 H1257.5" stroke="#cfcfcf" stroke-width="1.1"/>
<rect x="1248" y="452.5" width="6" height="6.5" fill="#cfcfcf"/>
<rect x="1268.5" y="447.6" width="10" height="10" rx="1.5" fill="none" stroke="#6e6e6e" stroke-width="1"/>
</svg>
<div class="t" style="left:1284.2px;top:447.72px;font-size:10.3px;color:#8a8a8a;font-weight:400;transform:scaleX(0.932);transform-origin:0 0;">Invert</div>
<svg style="left:1325px;top:477px;" width="13" height="4" viewBox="0 0 13 4"><circle cx="1.6" cy="1.8" r="1.6" fill="#dcdcdc"/><circle cx="6.4" cy="1.8" r="1.6" fill="#dcdcdc"/><circle cx="11.2" cy="1.8" r="1.6" fill="#dcdcdc"/></svg>
<div class="a" style="left:1125px;top:489px;width:224px;height:1.5px;background:#474747;"></div>
<div class="t" style="left:1134.6px;top:502.37px;font-size:10.6px;color:#ececec;font-weight:400;transform:scaleX(0.899);transform-origin:0 0;">Frame Fitting</div>
<svg style="left:1125px;top:515px" width="224" height="25" viewBox="1125 515 224 25"><rect x="1138.8" y="523.5" width="12.6" height="9.5" fill="#cfcfcf" stroke="#cfcfcf" stroke-width="1.1"/><circle cx="1138.8" cy="523.5" r="1.5" fill="#cfcfcf"/><circle cx="1151.4" cy="523.5" r="1.5" fill="#cfcfcf"/><circle cx="1138.8" cy="533" r="1.5" fill="#cfcfcf"/><circle cx="1151.4" cy="533" r="1.5" fill="#cfcfcf"/><path d="M1138.8 536 H1151.4" stroke="#cfcfcf" stroke-width="1.1" stroke-dasharray="1.3 1"/><path d="M1138.8 533.5 V536 M1151.4 533.5 V536" stroke="#cfcfcf" stroke-width="1"/><rect x="1160.7" y="523" width="13" height="12.8" fill="none" stroke="#cfcfcf" stroke-width="1.1"/><circle cx="1160.7" cy="523" r="1.5" fill="#cfcfcf"/><circle cx="1173.7" cy="523" r="1.5" fill="#cfcfcf"/><circle cx="1160.7" cy="535.8" r="1.5" fill="#cfcfcf"/><circle cx="1173.7" cy="535.8" r="1.5" fill="#cfcfcf"/><rect x="1160.7" y="523" width="10" height="12.8" fill="#cfcfcf"/><rect x="1182.7" y="523" width="13" height="12.8" fill="none" stroke="#cfcfcf" stroke-width="1.1"/><circle cx="1182.7" cy="523" r="1.5" fill="#cfcfcf"/><circle cx="1195.7" cy="523" r="1.5" fill="#cfcfcf"/><circle cx="1182.7" cy="535.8" r="1.5" fill="#cfcfcf"/><circle cx="1195.7" cy="535.8" r="1.5" fill="#cfcfcf"/><rect x="1184.5" y="524.5" width="4" height="4" fill="#cfcfcf"/><path d="M1191 526 V531 M1188.5 528.5 H1193.5" stroke="#cfcfcf" stroke-width="1"/><rect x="1204.5" y="523" width="13" height="12.8" fill="none" stroke="#cfcfcf" stroke-width="1.1"/><circle cx="1204.5" cy="523" r="1.5" fill="#cfcfcf"/><circle cx="1217.5" cy="523" r="1.5" fill="#cfcfcf"/><circle cx="1204.5" cy="535.8" r="1.5" fill="#cfcfcf"/><circle cx="1217.5" cy="535.8" r="1.5" fill="#cfcfcf"/><rect x="1206.3" y="524.5" width="4" height="4" fill="#cfcfcf"/><rect x="1206.3" y="530" width="3" height="3" fill="#cfcfcf"/><path d="M1213 527 V532" stroke="#cfcfcf" stroke-width="1"/><rect x="1227.0" y="523" width="13" height="12.8" fill="none" stroke="#cfcfcf" stroke-width="1.1"/><circle cx="1227.0" cy="523" r="1.5" fill="#cfcfcf"/><circle cx="1240.0" cy="523" r="1.5" fill="#cfcfcf"/><circle cx="1227.0" cy="535.8" r="1.5" fill="#cfcfcf"/><circle cx="1240.0" cy="535.8" r="1.5" fill="#cfcfcf"/><rect x="1230" y="526" width="7" height="7" fill="#cfcfcf"/><rect x="1249.2" y="523" width="13" height="12.8" fill="none" stroke="#cfcfcf" stroke-width="1.1" stroke-dasharray="1.5 1"/><rect x="1251.5" y="525.5" width="8.4" height="8" fill="#cfcfcf"/></svg>
<div class="a" style="left:1271.7px;top:519.3px;width:57.5px;height:18.4px;border:1px solid #6c6c6c;border-radius:2.5px;background:#535353"></div>
<div class="t" style="left:1283.75px;top:524.52px;font-size:10.3px;color:#ececec;font-weight:400;transform:scaleX(0.941);transform-origin:0 0;">Options</div>
<div class="a" style="left:1137.8px;top:550.2px;width:11px;height:10.8px;background:transparent;border:1px solid #9a9a9a;border-radius:1.5px"></div>
<div class="t" style="left:1154px;top:551.22px;font-size:10.3px;color:#e8e8e8;font-weight:400;transform:scaleX(0.998);transform-origin:0 0;">Auto-Fit</div>
<div class="a" style="left:1125px;top:571px;width:224px;height:1.5px;background:#474747;"></div>
<div class="t" style="left:1134.7px;top:579.12px;font-size:10.3px;color:#ececec;font-weight:400;transform:scaleX(0.938);transform-origin:0 0;">Quick Actions</div>
<div class="a" style="left:1134.5px;top:596.5px;width:93.5px;height:18.6px;border:1px solid #6c6c6c;border-radius:2.5px;background:#535353"></div>
<div class="t" style="left:1150.55px;top:602.22px;font-size:10.3px;color:#ececec;font-weight:400;transform:scaleX(0.894);transform-origin:0 0;">Convert Shape</div>
<div class="a" style="left:1236.3px;top:596.5px;width:92.7px;height:18.6px;border:1px solid #6c6c6c;border-radius:2.5px;background:#535353"></div>
<div class="t" style="left:1265.65px;top:602.22px;font-size:10.3px;color:#ececec;font-weight:400;transform:scaleX(0.928);transform-origin:0 0;">Arrange</div>
<div class="a" style="left:1134.5px;top:624px;width:93.5px;height:18.6px;border:1px solid #6c6c6c;border-radius:2.5px;background:#535353"></div>
<div class="t" style="left:1158.15px;top:629.72px;font-size:10.3px;color:#ececec;font-weight:400;transform:scaleX(0.950);transform-origin:0 0;">Import File</div>
<div class="a" style="left:1236.3px;top:624px;width:92.7px;height:18.6px;border:1px solid #6c6c6c;border-radius:2.5px;background:#535353"></div>
<div class="t" style="left:1268.05px;top:629.72px;font-size:10.3px;color:#ececec;font-weight:400;transform:scaleX(0.895);transform-origin:0 0;">Embed</div>
<div class="a" style="left:1134.5px;top:651.6px;width:93.5px;height:18.6px;border:1px solid #6c6c6c;border-radius:2.5px;background:#535353"></div>
<div class="t" style="left:1162.45px;top:657.32px;font-size:10.3px;color:#ececec;font-weight:400;transform:scaleX(0.912);transform-origin:0 0;">Edit With</div>
<div class="a" style="left:1236.3px;top:651.6px;width:92.7px;height:18.6px;border:1px solid #6c6c6c;border-radius:2.5px;background:#535353"></div>
<div class="t" style="left:1248.6px;top:657.32px;font-size:10.3px;color:#ececec;font-weight:400;transform:scaleX(0.908);transform-origin:0 0;">Reveal in Finder</div>
<div class="a" style="left:1134.5px;top:679px;width:194.5px;height:18.6px;border:1px solid #6c6c6c;border-radius:2.5px;background:#535353"></div>
<div class="t" style="left:1189.85px;top:684.72px;font-size:10.3px;color:#ececec;font-weight:400;transform:scaleX(0.921);transform-origin:0 0;">Find Similar Images</div>
<div class="t" style="left:1237px;top:779.5px;font-size:25px;color:rgba(255,235,250,0.32);font-weight:700;letter-spacing:0.2px;-webkit-text-stroke:0.6px rgba(255,235,250,0.3);transform:scaleX(0.97);transform-origin:0 0">SOFTPEDIA</div>
<svg style="left:1381.5px;top:779.5px;" width="8" height="8" viewBox="0 0 8 8"><circle cx="3.6" cy="3.6" r="3" fill="none" stroke="rgba(255,235,250,0.35)" stroke-width="1"/></svg>
</body></html>
